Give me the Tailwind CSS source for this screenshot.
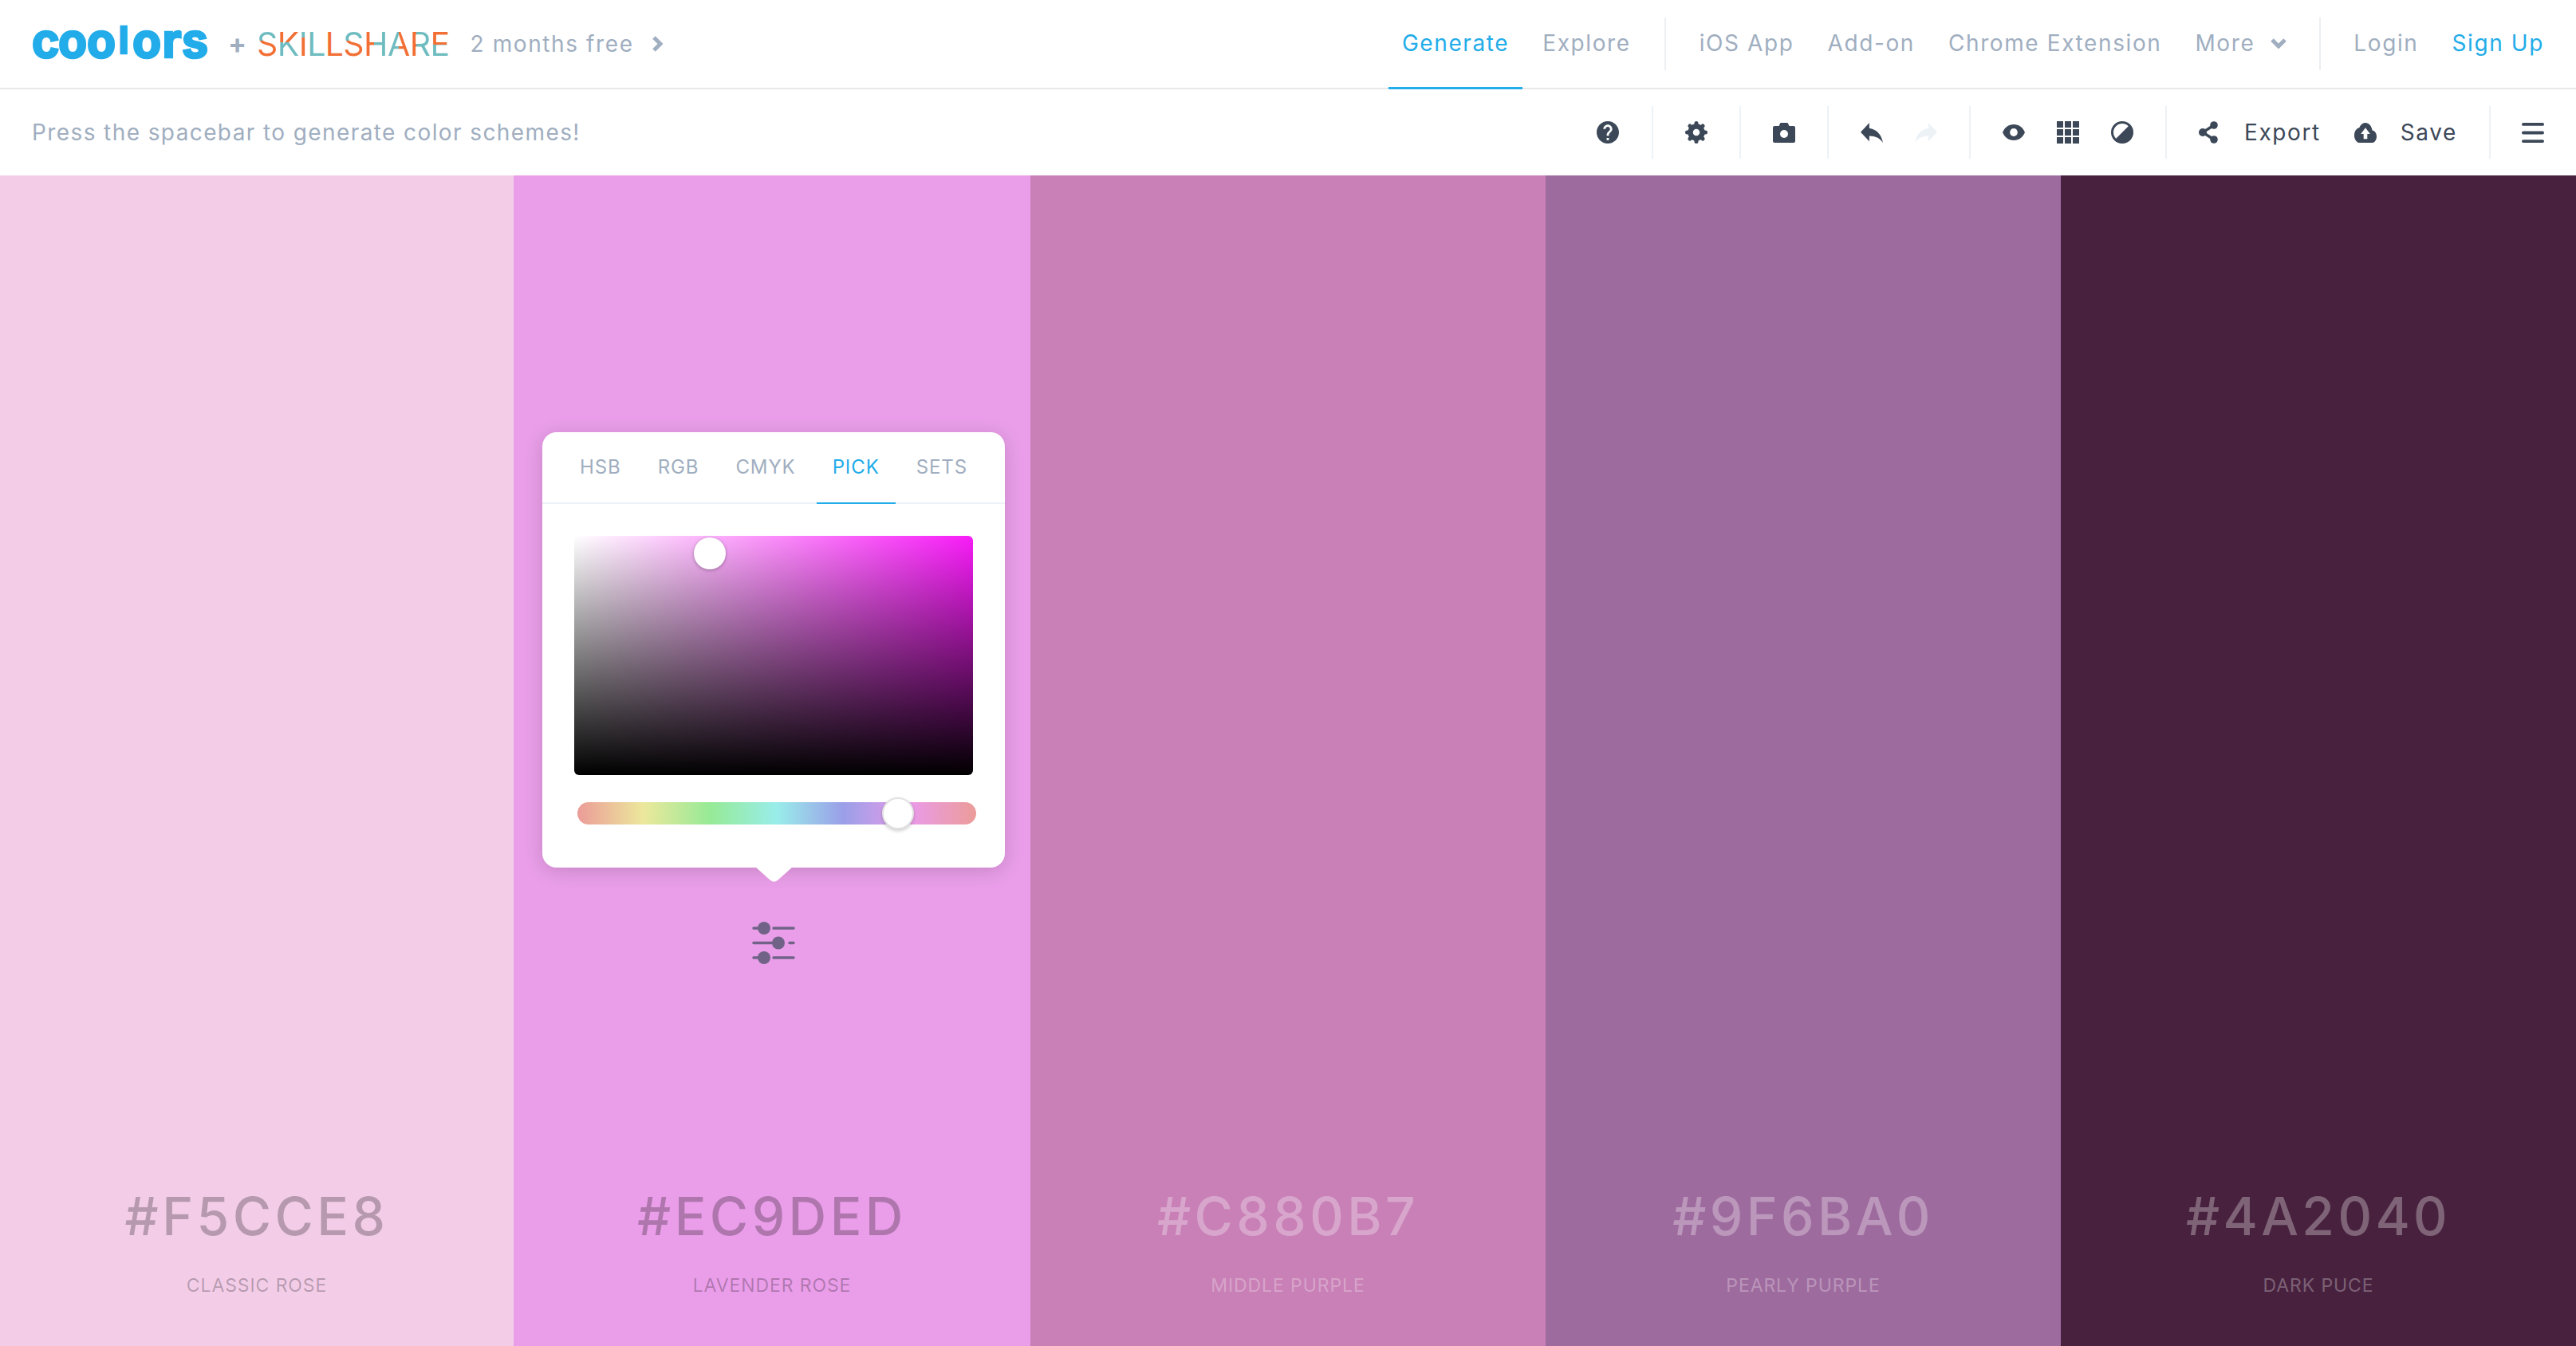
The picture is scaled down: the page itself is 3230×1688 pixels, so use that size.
<!DOCTYPE html>
<html lang="en">
<head>
<meta charset="utf-8">
<title>Coolors</title>
<script src="https://cdn.jsdelivr.net/npm/@tailwindcss/browser@4"></script>
</head>
<body class="h-[1688px] w-[3230px] overflow-hidden bg-white font-[Inter,sans-serif]">
<header class="flex h-[112px] items-stretch justify-between border-b-2 border-[#e6e8ea] pl-[40px] pr-[40px]">
  <div class="flex items-center">
    <div class="flex h-[60px] w-[220px] items-center font-bold text-[59px] leading-none text-[#22ace9] [-webkit-text-stroke:2.5px_#22ace9] -mt-[10px]">
      <span class="w-[33px] text-center">c</span><span class="w-[36px] text-center">o</span><span class="w-[36px] text-center">o</span><span class="w-[20px] text-center text-[46px]">l</span><span class="w-[38px] text-center">o</span><span class="w-[25px] text-center">r</span><span class="w-[32px] text-center">s</span>
    </div>
    <span class="ml-[26px] text-[34px] font-bold leading-none text-[#a0aec0]">+</span>
    <div class="ml-[13px] flex text-[41px] font-normal leading-none tracking-[-0.6px] text-[#6fbcc0]">
      <span class="bg-[linear-gradient(to_bottom,#6fbcc0_40%,#f26f35_40%)] bg-clip-text text-transparent">S</span><span class="bg-[linear-gradient(to_bottom,#f26f35_45%,#6fbcc0_45%)] bg-clip-text text-transparent">K</span><span class="bg-[linear-gradient(to_bottom,#6fbcc0_30%,#f26f35_30%)] bg-clip-text text-transparent">I</span><span>L</span><span class="text-[#f26f35]">L</span><span class="bg-[linear-gradient(to_bottom,#6fbcc0_40%,#f26f35_40%)] bg-clip-text text-transparent">S</span><span class="bg-[linear-gradient(to_right,#f26f35_45%,#6fbcc0_45%)] bg-clip-text text-transparent">H</span><span class="bg-[linear-gradient(to_right,#6fbcc0_50%,#f26f35_50%)] bg-clip-text text-transparent">A</span><span class="bg-[linear-gradient(to_right,#f26f35_30%,#6fbcc0_30%)] bg-clip-text text-transparent">R</span><span class="bg-[linear-gradient(to_bottom,#f26f35_50%,#6fbcc0_50%)] bg-clip-text text-transparent">E</span>
    </div>
    <span class="ml-[26px] text-[28px] tracking-[1.6px] text-[#a0aec0]">2 months free</span>
    <svg class="ml-[22px]" width="15" height="20" viewBox="0 0 15 20" fill="none" stroke="#a0aec0" stroke-width="5"><path d="M3 2l8 8-8 8"/></svg>
  </div>
  <nav class="flex items-stretch text-[28px] tracking-[1.6px] text-[#a0aec0]">
    <a class="-mb-[2px] flex items-center border-b-[3px] border-[#22ace9] px-[17px] pb-[2px] text-[#22ace9]">Generate</a>
    <a class="ml-[8px] flex items-center px-[17px] pb-[2px]">Explore</a>
    <div class="mx-[25px] my-[22px] w-[2px] bg-[#edf0f3]"></div>
    <a class="flex items-center px-[17px] pb-[2px]">iOS App</a>
    <a class="ml-[8px] flex items-center px-[17px] pb-[2px]">Add-on</a>
    <a class="ml-[8px] flex items-center px-[17px] pb-[2px]">Chrome Extension</a>
    <a class="ml-[8px] flex items-center gap-[20px] px-[17px] pb-[2px]">More
      <svg width="20" height="14" viewBox="0 0 20 14" fill="none" stroke="#a0aec0" stroke-width="5"><path d="M2 3l8 8 8-8"/></svg>
    </a>
    <div class="mx-[24px] my-[22px] w-[2px] bg-[#edf0f3]"></div>
    <a class="flex items-center px-[17px] pb-[2px]">Login</a>
    <a class="ml-[8px] flex items-center pl-[17px] pb-[2px] text-[#22ace9]">Sign Up</a>
  </nav>
</header>

<div class="flex h-[108px] items-center justify-between pl-[40px]">
  <p class="text-[28px] tracking-[1.4px] text-[#a0aec0]">Press the spacebar to generate color schemes!</p>
  <div class="flex h-[66px] items-stretch">
    <div class="flex w-[110px] items-center justify-center">
      <svg width="28" height="28" viewBox="2 2 20 20" fill="#3c4858"><path d="M12 2C6.48 2 2 6.48 2 12s4.48 10 10 10 10-4.48 10-10S17.52 2 12 2zm1 17h-2v-2h2v2zm2.07-7.75l-.9.92C13.45 12.9 13 13.5 13 15h-2v-.5c0-1.1.45-2.1 1.17-2.83l1.24-1.26c.37-.36.59-.86.59-1.41 0-1.1-.9-2-2-2s-2 .9-2 2H8c0-2.21 1.79-4 4-4s4 1.79 4 4c0 .88-.36 1.68-.93 2.25z"/></svg>
    </div>
    <div class="flex w-[110px] items-center justify-center border-l-2 border-[#edf2f7]">
      <svg width="28" height="28" viewBox="0 0 28 28" fill="none" stroke="#3c4858">
        <circle cx="14" cy="14" r="7.5" stroke-width="6.5"/>
        <g stroke-width="5" stroke-linecap="round"><path d="M14 2.5v2M14 23.5v2M2.5 14h2M23.5 14h2M5.9 5.9l1.4 1.4M20.7 20.7l1.4 1.4M5.9 22.1l1.4-1.4M20.7 7.3l1.4-1.4"/></g>
      </svg>
    </div>
    <div class="flex w-[110px] items-center justify-center border-l-2 border-[#edf2f7]">
      <svg width="28" height="25" viewBox="0 0 28 25"><path fill="#3c4858" d="M9.5 0h9l2 4H26a2 2 0 0 1 2 2v17a2 2 0 0 1-2 2H2a2 2 0 0 1-2-2V6a2 2 0 0 1 2-2h5.500z"/><circle cx="14" cy="14" r="5" fill="#fff"/></svg>
    </div>
    <div class="flex w-[178px] items-center justify-center gap-[40px] border-l-2 border-[#edf2f7]">
      <svg width="28" height="25" viewBox="3 5 18 15" preserveAspectRatio="none" fill="#3c4858"><path d="M10 9V5l-7 7 7 7v-4.100c5 0 8.500 1.600 11 5.100-1-5-4-10-11-11z"/></svg>
      <svg width="28" height="25" viewBox="3 5 18 15" preserveAspectRatio="none" fill="#edf2f7"><path d="M14 9V5l7 7-7 7v-4.100c-5 0-8.500 1.600-11 5.100 1-5 4-10 11-11z"/></svg>
    </div>
    <div class="flex w-[246px] items-center justify-center gap-[40px] border-l-2 border-[#edf2f7]">
      <svg width="28" height="20" viewBox="1 4.500 22 15" preserveAspectRatio="none"><path fill="#3c4858" d="M12 4.500C7 4.500 2.730 7.610 1 12c1.730 4.390 6 7.500 11 7.500s9.270-3.110 11-7.500c-1.730-4.390-6-7.500-11-7.500z"/><circle cx="12" cy="12" r="3.800" fill="#fff"/></svg>
      <svg width="28" height="28" viewBox="0 0 28 28" fill="#3c4858"><rect width="8" height="8"/><rect x="10" width="8" height="8"/><rect x="20" width="8" height="8"/><rect y="10" width="8" height="8"/><rect x="10" y="10" width="8" height="8"/><rect x="20" y="10" width="8" height="8"/><rect y="20" width="8" height="8"/><rect x="10" y="20" width="8" height="8"/><rect x="20" y="20" width="8" height="8"/></svg>
      <svg width="28" height="28" viewBox="0 0 28 28"><circle cx="14" cy="14" r="12.500" fill="#fff" stroke="#3c4858" stroke-width="3"/><path fill="#3c4858" d="M4.500 23.500L23.500 4.500A13 13 0 0 1 4.500 23.500z"/></svg>
    </div>
    <div class="flex w-[406px] items-center justify-center border-l-2 border-[#edf2f7] text-[28px] tracking-[1.6px] text-[#3c4858]">
      <svg width="24" height="28" viewBox="0 0 24 28" fill="#3c4858" stroke="#3c4858"><path fill="none" stroke-width="3.500" d="M19 5L5 14l14 9"/><circle cx="19" cy="5" r="4.800" stroke="none"/><circle cx="5" cy="14" r="5" stroke="none"/><circle cx="19" cy="23" r="4.800" stroke="none"/></svg>
      <span class="ml-[33px]">Export</span>
      <svg class="ml-[42px]" width="28" height="25" viewBox="0 4 24 16" preserveAspectRatio="none" fill="#3c4858"><path d="M19.350 10.040C18.670 6.590 15.640 4 12 4 9.110 4 6.600 5.640 5.350 8.040 2.340 8.360 0 10.910 0 14c0 3.310 2.690 6 6 6h13c2.760 0 5-2.240 5-5 0-2.640-2.050-4.780-4.650-4.960zM14 13v4h-4v-4H7l5-5 5 5h-3z"/></svg>
      <span class="ml-[30px]">Save</span>
    </div>
    <div class="flex w-[109px] items-center justify-center border-l-2 border-[#edf2f7] pr-[2px]">
      <svg width="28" height="25" viewBox="0 0 28 25" fill="#3c4858"><rect width="28" height="3.800" rx="1.900"/><rect y="10.600" width="28" height="3.800" rx="1.900"/><rect y="21.200" width="28" height="3.800" rx="1.900"/></svg>
    </div>
  </div>
</div>

<main class="grid h-[1468px] grid-cols-[644px_648px_646px_646px_646px]">
  <section class="relative flex flex-col items-center justify-end bg-[#f3cde8] pb-[64px] text-black/25">
    <h2 class="text-[66px] font-medium leading-none tracking-[4.4px]">#F5CCE8</h2>
    <p class="mt-[43px] text-[23px] leading-none tracking-[0.9px]">CLASSIC ROSE</p>
  </section>

  <section class="relative flex flex-col items-center justify-end bg-[#ea9ee9] pb-[64px] text-black/25">
    <div class="absolute left-[36px] top-[322px] h-[546px] w-[580px] rounded-[18px] bg-white shadow-[0_4px_24px_rgba(0,0,0,0.16)]">
      <div class="flex h-[90px] justify-center gap-[6px] border-b-2 border-[#edf2f7] text-[24px] tracking-[0.9px] text-[#a0aec0]">
        <span class="flex items-center px-[20px]">HSB</span>
        <span class="flex items-center px-[20px]">RGB</span>
        <span class="flex items-center px-[20px]">CMYK</span>
        <span class="-mb-[2px] flex items-center border-b-2 border-[#22ace9] px-[20px] text-[#22ace9]">PICK</span>
        <span class="flex items-center px-[20px]">SETS</span>
      </div>
      <div class="relative ml-[40px] mt-[40px] h-[300px] w-[500px] rounded-[6px] bg-[linear-gradient(to_top,#000,transparent),linear-gradient(to_right,#fff,#f81cf8)]">
        <div class="absolute left-[150px] top-[2px] size-[40px] rounded-full bg-white shadow-[0_1px_4px_rgba(0,0,0,0.3)]"></div>
      </div>
      <div class="relative ml-[44px] mt-[34px] h-[28px] w-[500px] rounded-full bg-[linear-gradient(to_right,#eb9c98,#ece89c_16.600%,#96ea96_33.300%,#99edea_50%,#9a9fe8_66.600%,#ea9bea_83.300%,#eb9c98)]">
        <div class="absolute left-[382px] -top-[6px] size-[40px] rounded-full border-2 border-[#e2e2e2] bg-white shadow-[0_2px_4px_rgba(0,0,0,0.2)]"></div>
      </div>
      <svg class="absolute -bottom-[19px] left-[267px]" width="47" height="20" viewBox="0 0 47 20" fill="#fff"><path d="M0 0h47L28 17q-4.500 3.500-9 0z"/></svg>
    </div>
    <svg class="absolute left-[299px] top-[935px]" width="54" height="54" viewBox="0 0 54 54" fill="#716387" stroke="#716387" stroke-width="3.500" stroke-linecap="round"><path fill="none" d="M2 9h8M27 9h25M2 27.500h30M47 27.500h5M2 46h8M27 46h25"/><circle cx="15" cy="9" r="8" stroke="none"/><circle cx="33" cy="27.500" r="8" stroke="none"/><circle cx="15" cy="46" r="8" stroke="none"/></svg>
    <h2 class="text-[66px] font-medium leading-none tracking-[4.4px]">#EC9DED</h2>
    <p class="mt-[43px] text-[23px] leading-none tracking-[0.9px]">LAVENDER ROSE</p>
  </section>

  <section class="flex flex-col items-center justify-end bg-[#c880b6] pb-[64px] text-white/30">
    <h2 class="text-[66px] font-medium leading-none tracking-[4.4px]">#C880B7</h2>
    <p class="mt-[43px] text-[23px] leading-none tracking-[0.9px]">MIDDLE PURPLE</p>
  </section>

  <section class="flex flex-col items-center justify-end bg-[#9e6b9e] pb-[64px] text-white/30">
    <h2 class="text-[66px] font-medium leading-none tracking-[4.4px]">#9F6BA0</h2>
    <p class="mt-[43px] text-[23px] leading-none tracking-[0.9px]">PEARLY PURPLE</p>
  </section>

  <section class="flex flex-col items-center justify-end bg-[#48213e] pb-[64px] text-white/30">
    <h2 class="text-[66px] font-medium leading-none tracking-[4.4px]">#4A2040</h2>
    <p class="mt-[43px] text-[23px] leading-none tracking-[0.9px]">DARK PUCE</p>
  </section>
</main>
</body>
</html>
